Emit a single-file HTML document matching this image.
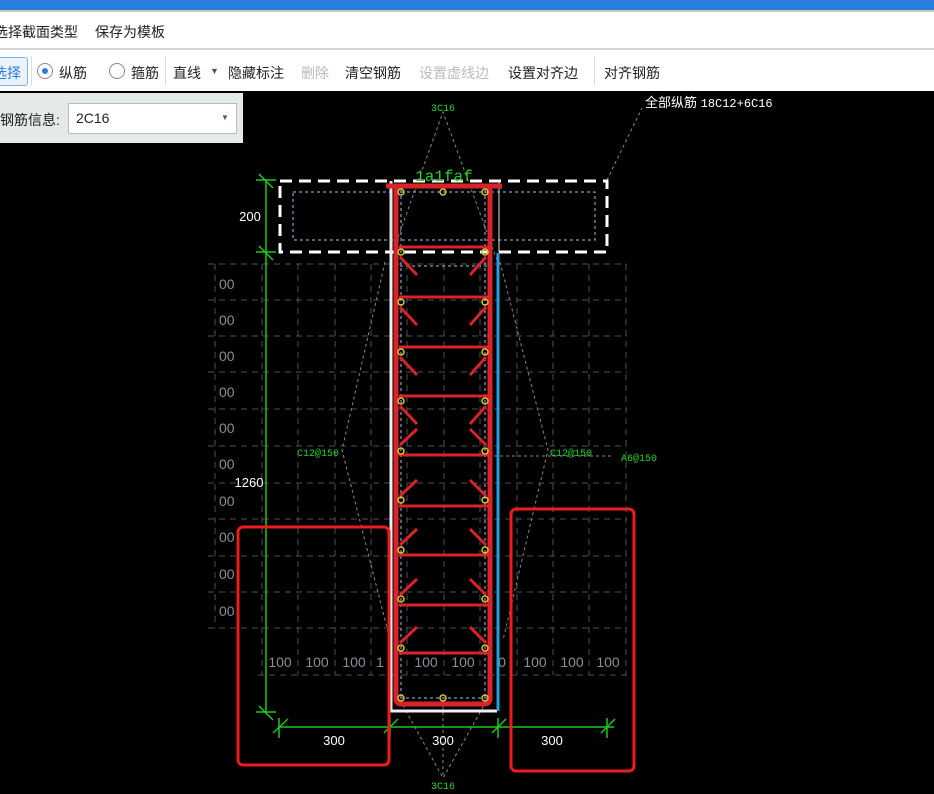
<!DOCTYPE html>
<html><head><meta charset="utf-8"><style>
html,body{margin:0;padding:0;width:934px;height:794px;overflow:hidden;background:#000;font-family:"Liberation Sans","Noto Sans CJK SC",sans-serif;}
.title{position:absolute;left:0;top:0;width:934px;height:10px;background:#2b7fdc;}
.sep{position:absolute;left:0;top:10px;width:934px;height:2px;background:#c8c8c8;}
.menu{position:absolute;left:0;top:12px;width:934px;height:36px;background:#fff;border-bottom:2px solid #d4d4d4;}
.menu span{position:absolute;top:10px;font-size:14px;color:#222;}
.tool{position:absolute;left:0;top:50px;width:934px;height:41px;background:#fff;}
.tool span{position:absolute;top:13px;font-size:14px;color:#222;white-space:nowrap;}
.tool .dis{color:#bbb;}
.vs{position:absolute;top:6px;width:1px;height:30px;background:#ddd;}
.panel{position:absolute;left:0;top:93px;width:243px;height:50px;background:#e4e9ea;}
.panel .lbl{position:absolute;left:0;top:17px;font-size:14px;color:#222;}
.dd{position:absolute;left:68px;top:10px;width:167px;height:29px;background:#fff;border:1px solid #bbb;}
.dd span{position:absolute;left:7px;top:6px;font-size:14px;color:#222;}
svg{position:absolute;left:0;top:0;}
</style></head><body>
<div class="title"></div><div class="sep"></div>
<div class="menu"><span style="left:-6px">选择截面类型</span><span style="left:95px">保存为模板</span></div>
<div class="tool">
<div style="position:absolute;left:-4px;top:7px;width:30px;height:27px;border:1px solid #7fb4ea;border-radius:3px;background:#eaf3fd"></div>
<span style="left:-7px;color:#2b7fdc">选择</span>
<div class="vs" style="left:31px"></div>
<div style="position:absolute;left:37px;top:13px;width:14px;height:14px;border:1px solid #888;border-radius:50%;background:#fff"></div>
<div style="position:absolute;left:42px;top:18px;width:6px;height:6px;border-radius:50%;background:#2b7fdc"></div>
<span style="left:59px">纵筋</span>
<div style="position:absolute;left:109px;top:13px;width:14px;height:14px;border:1px solid #888;border-radius:50%;background:#fff"></div>
<span style="left:131px">箍筋</span>
<div class="vs" style="left:165px"></div>
<span style="left:173px">直线</span><span style="left:210px;font-size:9px;top:16px;color:#555">▼</span>
<span style="left:228px">隐藏标注</span>
<span class="dis" style="left:301px">删除</span>
<span style="left:345px">清空钢筋</span>
<span class="dis" style="left:419px">设置虚线边</span>
<span style="left:508px">设置对齐边</span>
<div class="vs" style="left:594px"></div>
<span style="left:604px">对齐钢筋</span>
</div>
<svg width="934" height="794" viewBox="0 0 934 794" font-family="Liberation Mono,monospace">
<rect x="0" y="91" width="934" height="703" fill="#000"/>
<g stroke="#4a4f5a" stroke-width="1" stroke-dasharray="6,5" fill="none">
<line x1="215" y1="264" x2="215" y2="628"/><line x1="262" y1="264" x2="262" y2="675"/><line x1="298" y1="264" x2="298" y2="675"/><line x1="335" y1="264" x2="335" y2="675"/><line x1="371" y1="264" x2="371" y2="675"/><line x1="407" y1="264" x2="407" y2="675"/><line x1="444" y1="264" x2="444" y2="675"/><line x1="480" y1="264" x2="480" y2="675"/><line x1="517" y1="264" x2="517" y2="675"/><line x1="553" y1="264" x2="553" y2="675"/><line x1="589" y1="264" x2="589" y2="675"/><line x1="626" y1="264" x2="626" y2="675"/>
<line x1="208" y1="264" x2="627" y2="264"/><line x1="208" y1="300" x2="627" y2="300"/><line x1="208" y1="336" x2="627" y2="336"/><line x1="208" y1="372" x2="627" y2="372"/><line x1="208" y1="409" x2="627" y2="409"/><line x1="208" y1="446" x2="627" y2="446"/><line x1="208" y1="483" x2="627" y2="483"/><line x1="208" y1="519" x2="627" y2="519"/><line x1="208" y1="556" x2="627" y2="556"/><line x1="208" y1="592" x2="627" y2="592"/><line x1="208" y1="628" x2="627" y2="628"/><line x1="258" y1="675" x2="627" y2="675"/>
</g>
<g fill="#8a8f96" font-size="14" font-family="Liberation Sans,sans-serif">
<text x="219" y="289">00</text><text x="219" y="325">00</text><text x="219" y="361">00</text><text x="219" y="397">00</text><text x="219" y="433">00</text><text x="219" y="469">00</text><text x="219" y="506">00</text><text x="219" y="542">00</text><text x="219" y="579">00</text><text x="219" y="616">00</text>
<g text-anchor="middle"><text x="280" y="667">100</text><text x="317" y="667">100</text><text x="354" y="667">100</text><text x="380" y="667">1</text><text x="426" y="667">100</text><text x="463" y="667">100</text><text x="502" y="667">0</text><text x="535" y="667">100</text><text x="572" y="667">100</text><text x="608" y="667">100</text></g>
</g>
<g stroke="#888" stroke-width="1" stroke-dasharray="3,3" fill="none">
<polyline points="390,260 443,112 497,260"/>
<polyline points="385,262 342,450 390,640"/>
<polyline points="500,262 548,450 503,640"/>
<polyline points="400,700 443,778 487,700"/>
<line x1="443" y1="700" x2="443" y2="778"/>
<line x1="607" y1="180" x2="642" y2="108"/>
<line x1="440" y1="456" x2="612" y2="456"/>
</g>
<g stroke="#9cc3e8" stroke-width="1" stroke-dasharray="3,3" fill="none">
<rect x="293" y="192" width="302" height="48"/>
<line x1="401" y1="190" x2="401" y2="700"/><line x1="485" y1="190" x2="485" y2="700"/>
<line x1="400" y1="266" x2="490" y2="266"/><line x1="400" y1="698" x2="490" y2="698"/>
</g>
<rect x="280" y="181" width="327" height="71" fill="none" stroke="#fff" stroke-width="3" stroke-dasharray="12,7"/>
<polyline points="391,181 391,711 497,711" fill="none" stroke="#f0f0f0" stroke-width="3"/>
<line x1="391" y1="181" x2="391" y2="252" stroke="#ddd" stroke-width="1"/>
<line x1="499" y1="181" x2="499" y2="252" stroke="#ddd" stroke-width="1"/>
<line x1="498" y1="253" x2="498" y2="711" stroke="#1ea0e0" stroke-width="3"/>
<g stroke="#d8232a" fill="none">
<rect x="396" y="186" width="94" height="518" rx="5" stroke-width="5"/>
<line x1="386" y1="186" x2="502" y2="186" stroke-width="5"/>
<g stroke-width="3">
<line x1="399" y1="247" x2="488" y2="247"/><line x1="399" y1="297" x2="488" y2="297"/><line x1="399" y1="347" x2="488" y2="347"/><line x1="399" y1="396" x2="488" y2="396"/><line x1="399" y1="455" x2="488" y2="455"/><line x1="399" y1="506" x2="488" y2="506"/><line x1="399" y1="555" x2="488" y2="555"/><line x1="399" y1="605" x2="488" y2="605"/><line x1="399" y1="653" x2="488" y2="653"/>
<line x1="400" y1="257" x2="417" y2="275"/><line x1="486" y1="257" x2="470" y2="275"/>
<line x1="400" y1="307" x2="417" y2="325"/><line x1="486" y1="307" x2="470" y2="325"/>
<line x1="400" y1="357" x2="417" y2="375"/><line x1="486" y1="357" x2="470" y2="375"/>
<line x1="400" y1="406" x2="417" y2="424"/><line x1="486" y1="406" x2="470" y2="424"/>
<line x1="400" y1="445" x2="417" y2="429"/><line x1="486" y1="445" x2="470" y2="429"/>
<line x1="400" y1="496" x2="417" y2="480"/><line x1="486" y1="496" x2="470" y2="480"/>
<line x1="400" y1="545" x2="417" y2="529"/><line x1="486" y1="545" x2="470" y2="529"/>
<line x1="400" y1="595" x2="417" y2="579"/><line x1="486" y1="595" x2="470" y2="579"/>
<line x1="400" y1="643" x2="417" y2="627"/><line x1="486" y1="643" x2="470" y2="627"/>
</g></g>
<g fill="none" stroke="#d8c23a" stroke-width="1.5">
<circle cx="401" cy="192" r="3"/><circle cx="443" cy="192" r="3"/><circle cx="485" cy="192" r="3"/>
<circle cx="401" cy="252" r="3"/><circle cx="485" cy="252" r="3"/><circle cx="401" cy="302" r="3"/><circle cx="485" cy="302" r="3"/><circle cx="401" cy="352" r="3"/><circle cx="485" cy="352" r="3"/><circle cx="401" cy="401" r="3"/><circle cx="485" cy="401" r="3"/><circle cx="401" cy="451" r="3"/><circle cx="485" cy="451" r="3"/><circle cx="401" cy="500" r="3"/><circle cx="485" cy="500" r="3"/><circle cx="401" cy="550" r="3"/><circle cx="485" cy="550" r="3"/><circle cx="401" cy="599" r="3"/><circle cx="485" cy="599" r="3"/><circle cx="401" cy="648" r="3"/><circle cx="485" cy="648" r="3"/>
<circle cx="401" cy="698" r="3"/><circle cx="443" cy="698" r="3"/><circle cx="485" cy="698" r="3"/>
</g>
<g stroke="#1ec81e" stroke-width="1.5" fill="none">
<line x1="266" y1="179" x2="266" y2="713"/>
<line x1="256" y1="180" x2="276" y2="180"/><line x1="259" y1="174" x2="273" y2="188"/>
<line x1="256" y1="252" x2="276" y2="252"/><line x1="259" y1="246" x2="273" y2="260"/>
<line x1="256" y1="712" x2="276" y2="712"/><line x1="259" y1="706" x2="273" y2="720"/>
<line x1="278" y1="727" x2="614" y2="727"/>
<line x1="279" y1="718" x2="279" y2="738"/><line x1="273" y1="733" x2="288" y2="719"/>
<line x1="390" y1="718" x2="390" y2="738"/><line x1="384" y1="733" x2="398" y2="719"/>
<line x1="498" y1="718" x2="498" y2="738"/><line x1="492" y1="733" x2="506" y2="719"/>
<line x1="607" y1="718" x2="607" y2="738"/><line x1="601" y1="733" x2="615" y2="719"/>
</g>
<g fill="#fff" font-family="Liberation Sans,sans-serif" font-size="13" text-anchor="middle">
<text x="250" y="221">200</text><text x="249" y="487">1260</text>
<text x="334" y="745">300</text><text x="443" y="745">300</text><text x="552" y="745">300</text>
</g>
<g fill="#22d322" font-size="10" text-anchor="middle">
<text x="443" y="111">3C16</text><text x="443" y="789">3C16</text>
<text x="318" y="456">C12@150</text><text x="571" y="456">C12@150</text><text x="639" y="461">A6@150</text>
<text x="444" y="181" font-size="16">1a1faf</text>
</g>
<text x="645" y="107" fill="#fff" font-size="13" font-family="Liberation Sans,Noto Sans CJK SC,sans-serif">全部纵筋 <tspan font-family="Liberation Mono,monospace" font-size="12">18C12+6C16</tspan></text>
<g fill="none" stroke="#ee1c1c" stroke-width="3">
<rect x="238" y="527" width="151" height="238" rx="5"/>
<rect x="511" y="509" width="123" height="262" rx="5"/>
</g>
</svg>
<div class="panel"><span class="lbl">钢筋信息:</span><div class="dd"><span>2C16</span><span style="left:152px;top:9px;font-size:8px;color:#555">▼</span></div></div>
</body></html>
